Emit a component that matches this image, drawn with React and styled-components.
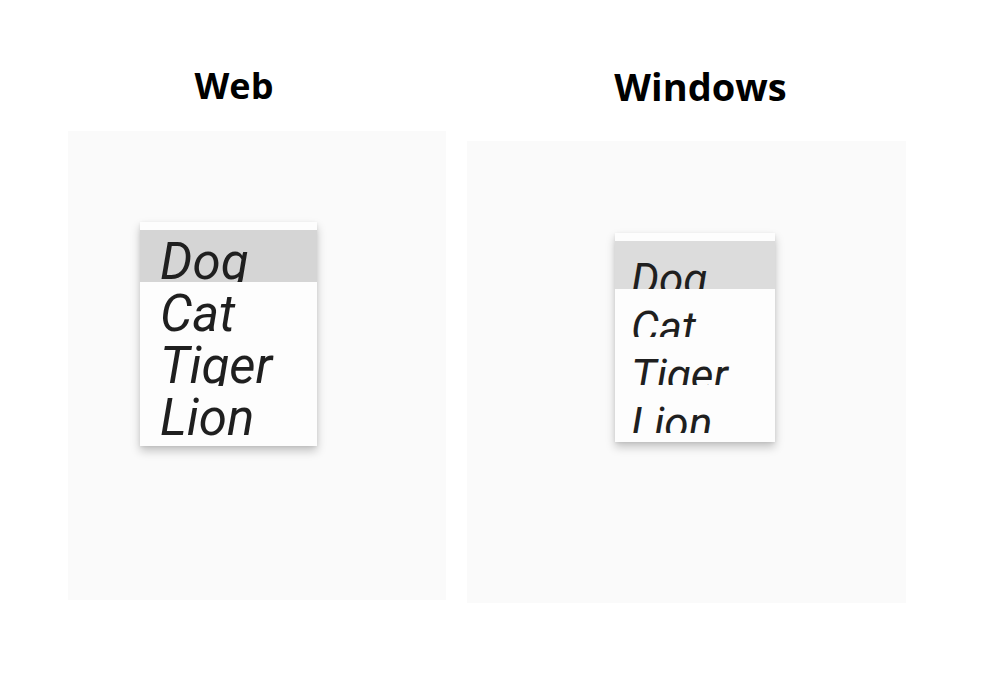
import React from "react";
import styled, { createGlobalStyle } from "styled-components";

const GlobalStyle = createGlobalStyle`
  html, body {
    margin: 0;
    padding: 0;
    background: #ffffff;
  }
  body {
    font-family: "Open Sans", "Noto Sans", sans-serif;
  }
`;

const Page = styled.div`
  display: flex;
  align-items: flex-start;
  padding: 66px 0 0 68px;
  gap: 21px;
  width: 983px;
  height: 696px;
  box-sizing: border-box;
`;

const Column = styled.div`
  display: flex;
  flex-direction: column;
  width: ${(p) => p.$width}px;
`;

const Title = styled.h2`
  margin: 0;
  font-family: "Open Sans", "Noto Sans", sans-serif;
  font-weight: 700;
  font-size: ${(p) => p.$size}px;
  line-height: 40px;
  color: #000;
  text-align: center;
  padding-left: ${(p) => (p.$shift > 0 ? p.$shift * 2 : 0)}px;
  padding-right: ${(p) => (p.$shift < 0 ? -p.$shift * 2 : 0)}px;
`;

const Panel = styled.div`
  margin-top: ${(p) => p.$top}px;
  height: ${(p) => p.$height}px;
  background: #fafafa;
  padding: ${(p) => p.$padTop}px 0 0 ${(p) => p.$padLeft}px;
  box-sizing: border-box;
`;

const Menu = styled.ul`
  list-style: none;
  margin: 0;
  width: ${(p) => p.$width}px;
  padding: 8px 0 ${(p) => p.$padBottom}px;
  background: #fdfdfd;
  box-shadow: 0 5px 9px rgba(0, 0, 0, 0.22), 0 1px 3px rgba(0, 0, 0, 0.08);
`;

const Item = styled.li`
  height: ${(p) => p.$row}px;
  line-height: ${(p) => p.$line}px;
  font-size: ${(p) => p.$size}px;
  overflow: hidden;
  white-space: nowrap;
  padding-left: ${(p) => p.$indent}px;
  font-family: Roboto, "Noto Sans", sans-serif;
  font-style: italic;
  color: #1f1f1f;
  background: ${(p) => (p.$active ? p.$hl : "transparent")};
`;

const animals = ["Dog", "Cat", "Tiger", "Lion"];

const webItem = { $row: 52, $line: 64, $size: 51, $indent: 20, $hl: "#d5d5d5" };
const winItem = { $row: 48, $line: 79, $size: 44, $indent: 16, $hl: "#dcdcdc" };

function Dropdown({ width, padBottom, item }) {
  return (
    <Menu $width={width} $padBottom={padBottom}>
      {animals.map((a, i) => (
        <Item key={a} {...item} $active={i === 0}>
          {a}
        </Item>
      ))}
    </Menu>
  );
}

export default function App() {
  return (
    <>
      <GlobalStyle />
      <Page>
        <Column $width={378}>
          <Title $size={36} $shift={-23}>Web</Title>
          <Panel $top={25} $height={469} $padTop={91} $padLeft={72}>
            <Dropdown width={177} padBottom={8} item={webItem} />
          </Panel>
        </Column>
        <Column $width={439}>
          <Title $size={38} $shift={14}>Windows</Title>
          <Panel $top={35} $height={462} $padTop={92} $padLeft={148}>
            <Dropdown width={160} padBottom={9} item={winItem} />
          </Panel>
        </Column>
      </Page>
    </>
  );
}
